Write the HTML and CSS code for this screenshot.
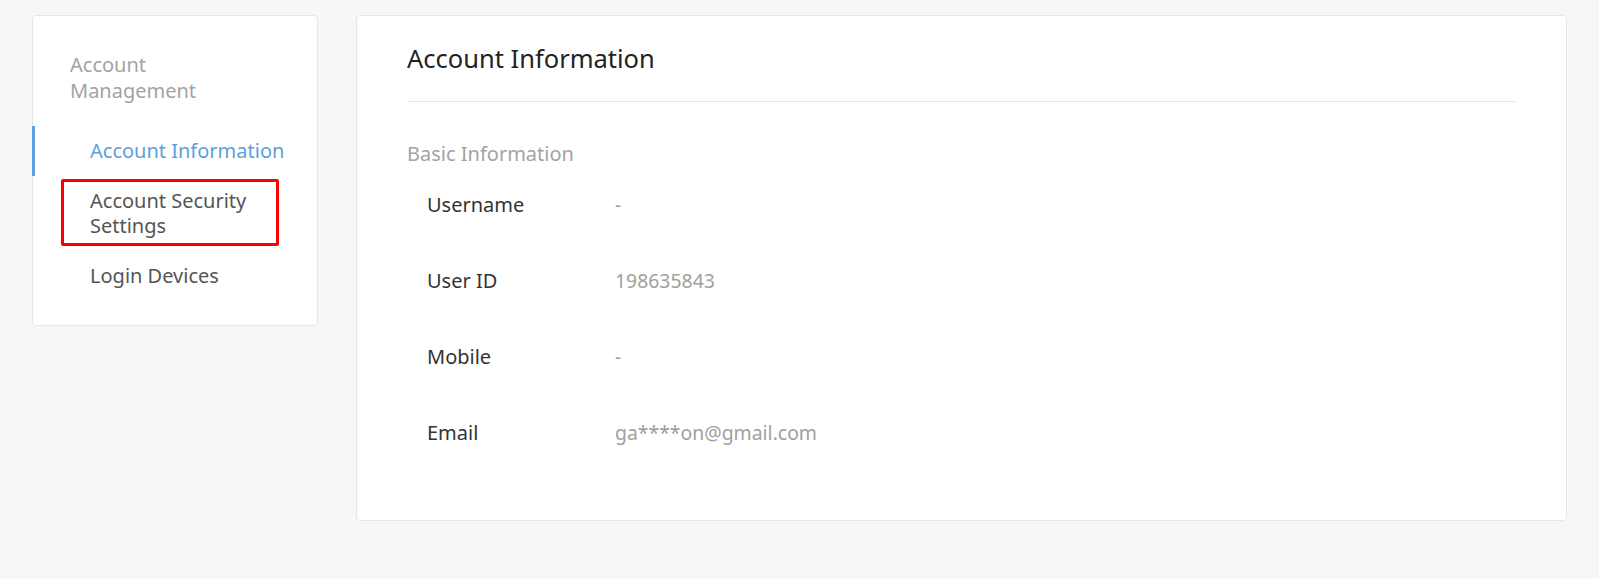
FILE: index.html
```html
<!DOCTYPE html>
<html lang="en">
<head>
<meta charset="utf-8">
<title>Account Information</title>
<link rel="stylesheet" href="styles.css">
</head>
<body>
<div class="layout">
  <aside class="side-card">
    <div class="side-title">Account Management</div>
    <nav class="side-nav">
      <a class="side-item active">Account Information</a>
      <a class="side-item highlighted">Account Security Settings<span class="mark-box"></span></a>
      <a class="side-item">Login Devices</a>
    </nav>
  </aside>
  <main class="main-card">
    <h1 class="page-title">Account Information</h1>
    <h2 class="section-title">Basic Information</h2>
    <div class="info-list">
      <div class="info-row"><span class="info-label">Username</span><span class="info-value">-</span></div>
      <div class="info-row"><span class="info-label">User ID</span><span class="info-value">198635843</span></div>
      <div class="info-row"><span class="info-label">Mobile</span><span class="info-value">-</span></div>
      <div class="info-row"><span class="info-label">Email</span><span class="info-value">ga****on@gmail.com</span></div>
    </div>
  </main>
</div>
</body>
</html>
```

FILE: styles.css
```css
html, body {
  margin: 0;
  padding: 0;
  background: #f7f7f7;
  font-family: "Noto Sans", "Open Sans", sans-serif;
}

.layout {
  display: flex;
  align-items: flex-start;
  gap: 38px;
  padding: 15px 32px 0 32px;
}

.side-card {
  width: 286px;
  box-sizing: border-box;
  flex: none;
  background: #fff;
  border: 1px solid #e6e6e6;
  border-radius: 4px;
  padding: 36px 0 24px 0;
  position: relative;
}

.side-title {
  font-size: 20px;
  line-height: 26px;
  color: #a3a3a3;
  padding: 0 60px 0 37px;
  margin-bottom: 22px;
}

.side-nav {
  display: flex;
  flex-direction: column;
}

.side-item {
  position: relative;
  display: block;
  font-size: 20px;
  line-height: 25px;
  color: #555;
  padding: 12px 20px 13px 57px;
  cursor: pointer;
}

.side-item.active {
  color: #5b9fdc;
}

.side-item.active::before {
  content: "";
  position: absolute;
  left: -1px;
  top: 0;
  bottom: 0;
  width: 3px;
  background: #5b9fdc;
}

.mark-box {
  position: absolute;
  left: 28px;
  top: 3px;
  width: 218px;
  height: 67px;
  box-sizing: border-box;
  border: 3px solid #ff0000;
  border-radius: 2px;
  pointer-events: none;
}

.main-card {
  flex: 1;
  background: #fff;
  border: 1px solid #e6e6e6;
  border-radius: 4px;
  padding: 0 50px 49px 50px;
}

.page-title {
  margin: 0;
  font-weight: 400;
  font-size: 25.5px;
  line-height: 34px;
  color: #222;
  padding: 25px 0 26px 0;
  border-bottom: 1px solid #e6e6e6;
}

.section-title {
  margin: 39px 0 0 0;
  font-weight: 400;
  font-size: 20px;
  line-height: 26px;
  color: #a3a3a3;
}

.info-list {
  display: flex;
  flex-direction: column;
}

.info-row {
  display: flex;
  align-items: center;
  height: 76px;
  padding-left: 20px;
  font-size: 20px;
  line-height: 26px;
}

.info-label {
  width: 188px;
  flex: none;
  color: #333;
}

.info-value {
  color: #a0a0a0;
  font-size: 19.4px;
}
```
